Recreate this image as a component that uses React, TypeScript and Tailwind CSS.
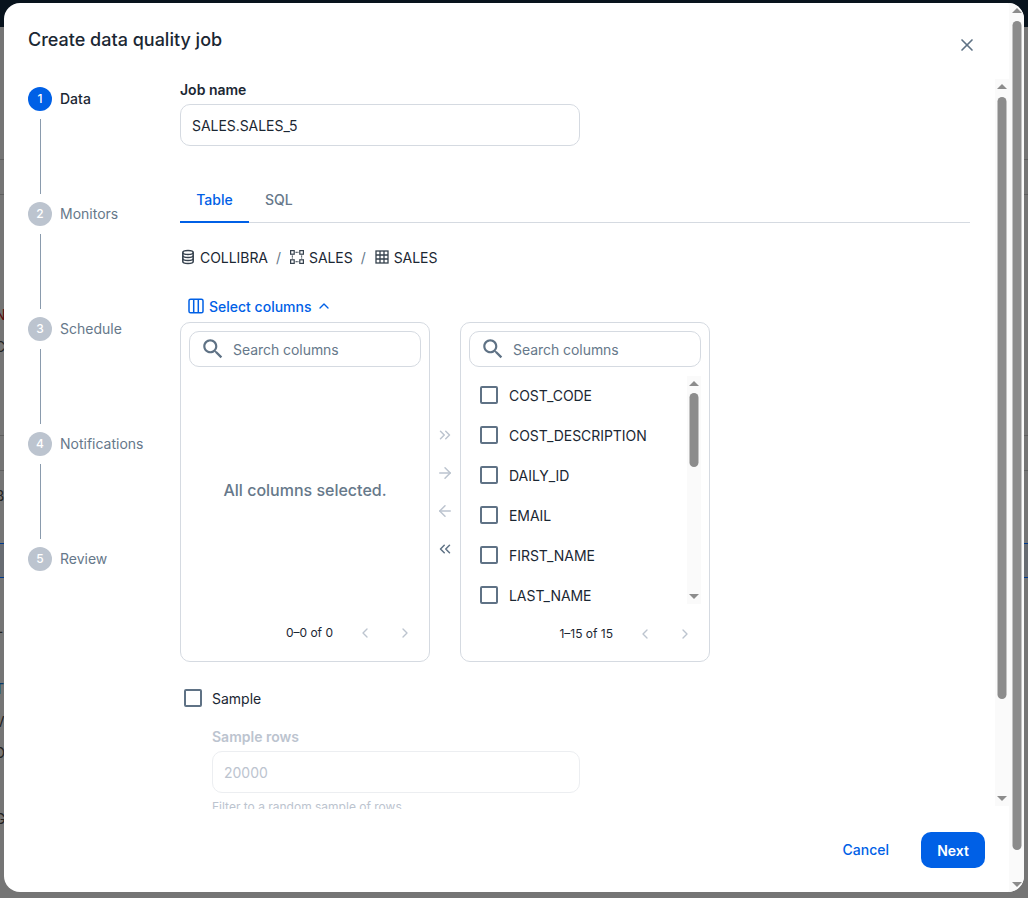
import {
  ArrowLeft,
  ArrowRight,
  ChevronLeft,
  ChevronRight,
  ChevronsLeft,
  ChevronsRight,
  ChevronUp,
  X,
} from "lucide-react";

const steps = ["Data", "Monitors", "Schedule", "Notifications", "Review"];
const columns = ["COST_CODE", "COST_DESCRIPTION", "DAILY_ID", "EMAIL", "FIRST_NAME", "LAST_NAME"];

function SearchIcon() {
  return (
    <svg width="26" height="26" viewBox="0 0 24 24" fill="currentColor" className="mb-[1px] shrink-0 text-[#5f7285]">
      <path d="M15.5 14h-.79l-.28-.27C15.41 12.59 16 11.11 16 9.5 16 5.91 13.09 3 9.5 3S3 5.91 3 9.5 5.91 16 9.5 16c1.61 0 3.09-.59 4.23-1.57l.27.28v.79l5 4.99L20.49 19l-4.99-5zm-6 0C7.01 14 5 11.99 5 9.5S7.01 5 9.5 5 14 7.01 14 9.5 11.99 14 9.5 14z" />
    </svg>
  );
}

function DatabaseIcon() {
  return (
    <svg width="16" height="16" viewBox="0 0 16 16" fill="none" stroke="#36424e" strokeWidth="1.5" className="shrink-0">
      <ellipse cx="8" cy="3.4" rx="5.2" ry="2" />
      <path d="M2.8 3.4v9.2c0 1.1 2.3 2 5.2 2s5.2-.9 5.2-2V3.4" />
      <path d="M2.8 6.5c0 1.1 2.3 2 5.2 2s5.2-.9 5.2-2M2.8 9.6c0 1.1 2.3 2 5.2 2s5.2-.9 5.2-2" />
    </svg>
  );
}

function SchemaIcon() {
  return (
    <svg width="16" height="16" viewBox="0 0 16 16" fill="none" stroke="#36424e" strokeWidth="1.2" className="shrink-0">
      <rect x="1.6" y="1.6" width="3.6" height="3.6" />
      <rect x="10.8" y="1.6" width="3.6" height="3.6" />
      <rect x="1.6" y="10.8" width="3.6" height="3.6" />
      <rect x="10.8" y="10.8" width="3.6" height="3.6" />
      <path d="M6.6 3.4h2.8M3.4 6.6v2.8M12.6 6.6v2.8M6.6 12.6h2.8" strokeDasharray="1.2 0.6" />
    </svg>
  );
}

function GridIcon() {
  return (
    <svg width="16" height="16" viewBox="0 0 16 16" fill="none" stroke="#36424e" strokeWidth="1.3" className="shrink-0">
      <rect x="2" y="2" width="12" height="12" />
      <path d="M2 6h12M2 10h12M6 2v12M10 2v12" />
    </svg>
  );
}

function ColumnsIcon() {
  return (
    <svg width="16" height="16" viewBox="0 0 16 16" fill="none" stroke="currentColor" strokeWidth="1.5" className="shrink-0">
      <rect x="1" y="1.2" width="14" height="13.6" rx="1.6" />
      <path d="M5.7 1.2v13.6M10.3 1.2v13.6" />
    </svg>
  );
}

function Scrollbar({ thumbClass, className }: { thumbClass: string; className: string }) {
  return (
    <div className={`relative shrink-0 bg-[#fafafa] ${className}`}>
      <div className="absolute left-1/2 top-[5px] h-0 w-0 -translate-x-1/2 border-x-[5px] border-b-[5px] border-x-transparent border-b-[#8c8c8c]" />
      <div className={`absolute left-1/2 -translate-x-1/2 rounded-full bg-[#8c8c8c] ${thumbClass}`} />
      <div className="absolute bottom-[5px] left-1/2 h-0 w-0 -translate-x-1/2 border-x-[5px] border-t-[5px] border-x-transparent border-t-[#8c8c8c]" />
    </div>
  );
}

function SearchBox() {
  return (
    <div className="flex h-9 shrink-0 items-center rounded-[10px] border border-[#d5dae1] pl-[10px]">
      <SearchIcon />
      <span className="ml-[7px] text-[14px] tracking-[-0.05px] text-[#66788a]">Search columns</span>
    </div>
  );
}

function Pager({ label }: { label: string }) {
  return (
    <div className="flex h-[22px] items-center justify-end pr-[8px] text-[12px] text-[#1b2733]">
      <span>{label}</span>
      <ChevronLeft size={16} className="ml-[24px] text-[#bcc4cf]" />
      <ChevronRight size={16} className="ml-[24px] text-[#bcc4cf]" />
    </div>
  );
}

function Checkbox() {
  return <div className="h-[18px] w-[18px] shrink-0 rounded-[2px] border-2 border-[#5f7285]" />;
}

function Backdrop() {
  return (
    <>
      <div className="h-[27px] bg-[#08131d]" />
      <div className="absolute left-0 top-[159px] h-px w-full bg-[#5f5f5f]" />
      <div className="absolute left-0 top-[194px] h-px w-full bg-[#5f5f5f]" />
      <div className="absolute left-0 top-[435px] h-px w-full bg-[#5f5f5f]" />
      <div className="absolute left-0 top-[470px] h-px w-full bg-[#5f5f5f]" />
      <div className="absolute left-0 top-[543px] h-[35px] w-full border-y border-[#003a8c] bg-[#686c72]" />
      {[
        ["N", "top-[306px] text-[#5a0d0d]"],
        ["C", "top-[338px] text-[#222]"],
        ["B", "top-[487px] text-[#222]"],
        ["L", "top-[619px] text-[#222]"],
        ["T", "top-[680px] text-[#0a3a6a]"],
        ["V", "top-[713px] text-[#222]"],
        ["D", "top-[744px] text-[#222]"],
        ["G", "top-[810px] text-[#222]"],
      ].map(([letter, cls]) => (
        <span key={cls} className={`absolute -left-[5px] text-[14px] leading-[18px] ${cls}`}>
          {letter}
        </span>
      ))}
    </>
  );
}

export default function App() {
  return (
    <div className="relative h-[898px] w-[1028px] overflow-hidden bg-[#757575] font-['Inter',sans-serif] text-[#1b2733]">
      <Backdrop />
      <div className="absolute left-1 top-[3px] flex h-[889px] w-[1020px] overflow-hidden rounded-[16px] bg-white">
        <div className="flex min-w-0 flex-1 flex-col">
          <div className="flex h-[76px] shrink-0 items-start justify-between pl-6 pr-[32px]">
            <h2 className="mt-[24px] text-[18px] font-medium leading-[26px]">Create data quality job</h2>
            <X size={20} strokeWidth={2} className="mt-[32px] text-[#5f7285]" />
          </div>

          <div className="flex min-h-0 flex-1 items-start">
            <div className="min-w-0 flex-1 overflow-hidden">
              <div className="flex h-[730px] overflow-hidden pl-6">
                {/* stepper */}
                <div className="w-[152px] shrink-0 pt-2">
                  {steps.map((step, i) => (
                    <div key={step}>
                      <div className="flex h-6 items-center">
                        <div
                          className={`flex h-6 w-6 items-center justify-center rounded-full text-[12px] font-medium text-white ${
                            i === 0 ? "bg-[#0060e6]" : "bg-[#bcc4cf]"
                          }`}
                        >
                          {i + 1}
                        </div>
                        <span
                          className={`mb-[1px] ml-2 text-[14px] leading-[20px] ${
                            i === 0 ? "font-medium text-[#1b2733]" : "text-[#66788a]"
                          }`}
                        >
                          {step}
                        </span>
                      </div>
                      {i < steps.length - 1 && <div className="my-2 ml-3 h-[75px] w-px bg-[#8a9bad]" />}
                    </div>
                  ))}
                </div>

                {/* form */}
                <div className="w-[790px] shrink-0">
                  <div className="pt-[2px] text-[14px] font-semibold leading-[18px]">Job name</div>
                  <div className="mt-[5px] flex h-[42px] w-[400px] items-center rounded-[10px] border border-[#d5dae1] pl-[11px] text-[14px] tracking-[-0.05px]">
                    SALES.SALES_5
                  </div>

                  <div className="mt-[34px] flex h-[43px] border-b border-[#d5dae1] text-[14px]">
                    <div className="flex h-[43px] w-[69px] items-center justify-center border-b-2 border-[#0060e6] pb-[3px] font-medium text-[#0060e6]">
                      Table
                    </div>
                    <div className="flex h-[41px] items-center pb-[3px] pl-4 font-medium text-[#66788a]">SQL</div>
                  </div>

                  <div className="mt-[24px] flex h-5 items-center text-[14px] tracking-[-0.05px]">
                    <DatabaseIcon />
                    <span className="ml-[4px]">COLLIBRA</span>
                    <span className="mx-[8px] text-[#66788a]">/</span>
                    <SchemaIcon />
                    <span className="ml-[4px]">SALES</span>
                    <span className="mx-[8px] text-[#66788a]">/</span>
                    <GridIcon />
                    <span className="ml-[4px]">SALES</span>
                  </div>

                  <div className="mt-[29px] flex h-5 items-center pl-2 text-[14px] font-medium text-[#0060e6]">
                    <ColumnsIcon />
                    <span className="ml-[5px]">Select columns</span>
                    <ChevronUp size={16} className="ml-[5px]" />
                  </div>

                  <div className="mt-[6px] flex">
                    <div className="flex h-[340px] w-[250px] flex-col rounded-[10px] border border-[#d5dae1] px-2 pt-2">
                      <SearchBox />
                      <div className="flex flex-1 items-center justify-center pb-[10px] text-[16px] font-medium text-[#66788a]">
                        All columns selected.
                      </div>
                      <div className="mb-[17px]">
                        <Pager label="0–0 of 0" />
                      </div>
                    </div>

                    <div className="flex w-[30px] flex-col items-center pt-[104px] text-[#bcc4cf]">
                      <ChevronsRight size={18} />
                      <ArrowRight size={18} className="mt-[20px]" />
                      <ArrowLeft size={18} className="mt-[20px]" />
                      <ChevronsLeft size={18} className="mt-[20px] text-[#5f7285]" />
                    </div>

                    <div className="flex h-[340px] w-[250px] flex-col rounded-[10px] border border-[#d5dae1] px-2 pt-2">
                      <SearchBox />
                      <div className="mt-[9px] flex h-[228px] overflow-hidden">
                        <div className="-mt-px flex-1">
                          {columns.map((col) => (
                            <div key={col} className="flex h-10 items-center pl-[11px] text-[14px] tracking-[-0.05px]">
                              <Checkbox />
                              <span className="ml-[11px]">{col}</span>
                            </div>
                          ))}
                        </div>
                        <Scrollbar className="w-[14px]" thumbClass="top-[17px] h-[74px] w-[9px]" />
                      </div>
                      <div className="mt-[19px]">
                        <Pager label="1–15 of 15" />
                      </div>
                    </div>
                  </div>

                  <div className="mt-[26px] flex h-5 items-center pl-1 text-[14px]">
                    <Checkbox />
                    <span className="ml-[10px]">Sample</span>
                  </div>
                  <div className="ml-8 mt-[20px] text-[#bcc4cf]">
                    <div className="text-[14px] font-semibold leading-[18px]">Sample rows</div>
                    <div className="mt-[5px] flex h-[42px] w-[368px] items-center rounded-[10px] border border-[#eceef1] pl-[11px] text-[14px]">
                      20000
                    </div>
                    <div className="mt-[6px] text-[12px] leading-[16px]">Filter to a random sample of rows</div>
                  </div>
                </div>
              </div>
            </div>
            <Scrollbar className="h-[727px] w-[14px]" thumbClass="top-[18px] h-[602px] w-[9px]" />
          </div>

          <div className="flex h-[83px] shrink-0 items-start justify-end pr-[24px] pt-[23px] text-[14px] font-medium">
            <div className="flex h-9 items-center pb-px text-[#0060e6]">Cancel</div>
            <div className="ml-[32px] flex h-9 w-[64px] items-center justify-center rounded-[10px] bg-[#0060e6] font-semibold text-white">
              Next
            </div>
          </div>
        </div>
        <Scrollbar className="w-[15px]" thumbClass="top-[18px] h-[829px] w-[9px]" />
      </div>
    </div>
  );
}
